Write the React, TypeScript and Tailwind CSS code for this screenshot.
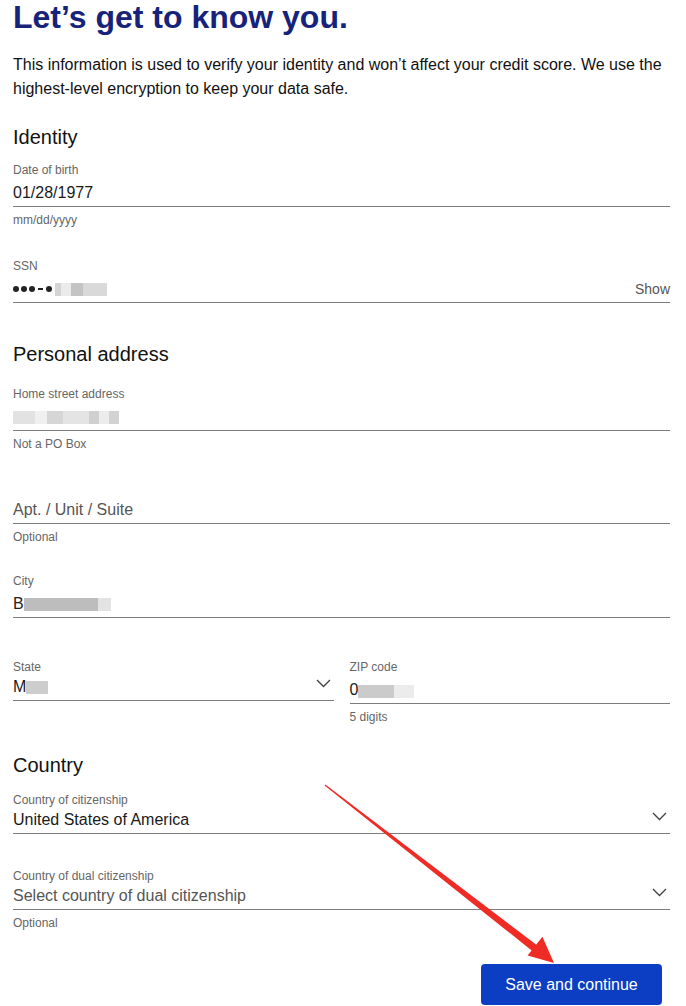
import React from 'react';

const labelCls = 'block text-[12px] leading-4 text-[#666]';

const Chevron = () => (
  <svg width="15" height="9" viewBox="0 0 15 9" className="mt-[4px] mr-[3px] shrink-0">
    <polyline points="1,1 7.5,7.5 14,1" fill="none" stroke="#444" strokeWidth="1.4" />
  </svg>
);

const Blur = ({ w, shade }: { w: number; shade: string }) => (
  <span className={`inline-block h-[13px] blur-[0.6px] ${shade}`} style={{ width: w }} />
);

type TextFieldProps = {
  label?: string;
  value?: React.ReactNode;
  placeholder?: string;
  helper?: string;
  right?: React.ReactNode;
  className?: string;
};

const TextField = ({ label, value, placeholder, helper, right, className = '' }: TextFieldProps) => (
  <div className={className}>
    <span className={`${labelCls} h-4 pt-px`}>{label}</span>
    <div className="flex items-center justify-between pt-[4px] pb-[1px] border-b border-[#7d7d7d]">
      <div className="flex items-center h-6 text-[16px] leading-6 text-[#1a1a1a]">
        {value ?? <span className="text-[#555]">{placeholder}</span>}
      </div>
      {right}
    </div>
    {helper && <p className={`${labelCls} mt-[5px]`}>{helper}</p>}
  </div>
);

type SelectFieldProps = {
  label: string;
  value?: React.ReactNode;
  placeholder?: string;
  helper?: string;
  className?: string;
};

const SelectField = ({ label, value, placeholder, helper, className = '' }: SelectFieldProps) => (
  <div className={className}>
    <span className="block text-[12px] leading-[13px] text-[#666] pt-px">{label}</span>
    <div className="flex items-start justify-between pt-[1px] pb-[1px] border-b border-[#7d7d7d]">
      <div className="flex items-center h-6 text-[16px] leading-6 text-[#1a1a1a]">
        {value ?? <span className="text-[#555]">{placeholder}</span>}
      </div>
      <Chevron />
    </div>
    {helper && <p className={`${labelCls} mt-[5px]`}>{helper}</p>}
  </div>
);

const Dot = () => <span className="inline-block w-[6px] h-[6px] rounded-full bg-[#222]" />;

export default function App() {
  return (
    <div className="relative w-[686px] min-h-[1006px] bg-white font-['Liberation_Sans',Arial,sans-serif] pl-[13px] pr-[16px] pt-px">
      <h1 className="text-[32px] leading-8 font-bold text-[#17237a]">Let’s get to know you.</h1>
      <p className="mt-[20px] text-[16px] leading-6 text-[#111]">
        This information is used to verify your identity and won’t affect your credit score. We use the highest-level
        encryption to keep your data safe.
      </p>

      <h2 className="mt-[22px] text-[20px] leading-7 text-[#111]">Identity</h2>
      <TextField className="mt-[10px]" label="Date of birth" value="01/28/1977" helper="mm/dd/yyyy" />
      <TextField
        className="mt-[29px]"
        label="SSN"
        value={
          <span className="flex items-center gap-[2px]">
            <Dot />
            <Dot />
            <Dot />
            <span className="inline-block w-[5px] h-[2px] bg-[#222] mx-[1px]" />
            <Dot />
            <span className="flex items-center ml-[1px]">
              <Blur w={6} shade="bg-[#d4d4d4]" />
              <Blur w={10} shade="bg-[#ebebeb]" />
              <Blur w={12} shade="bg-[#c4c4c4]" />
              <Blur w={24} shade="bg-[#d9d9d9]" />
            </span>
          </span>
        }
        right={<span className="text-[14px] text-[#555]">Show</span>}
      />

      <h2 className="mt-[37px] text-[20px] leading-7 text-[#111]">Personal address</h2>
      <TextField
        className="mt-[17px]"
        label="Home street address"
        value={
          <span className="flex items-center">
            <Blur w={22} shade="bg-[#e2e2e2]" />
            <Blur w={12} shade="bg-[#f0f0f0]" />
            <Blur w={16} shade="bg-[#d6d6d6]" />
            <Blur w={26} shade="bg-[#e4e4e4]" />
            <Blur w={10} shade="bg-[#cfcfcf]" />
            <Blur w={10} shade="bg-[#ececec]" />
            <Blur w={10} shade="bg-[#d2d2d2]" />
          </span>
        }
        helper="Not a PO Box"
      />
      <TextField className="mt-[26px]" placeholder="Apt. / Unit / Suite" helper="Optional" />
      <TextField
        className="mt-[27px]"
        label="City"
        value={
          <span className="flex items-center">
            <span className="text-[#222]">B</span>
            <Blur w={74} shade="bg-[#bdbdbd]" />
            <Blur w={13} shade="bg-[#e3e3e3]" />
          </span>
        }
      />

      <div className="mt-[40px] grid grid-cols-2 gap-[16px]">
        <SelectField
          className="pt-[2px]"
          label="State"
          value={
            <span className="flex items-center">
              <span>M</span>
              <Blur w={22} shade="bg-[#cdcdcd]" />
            </span>
          }
        />
        <TextField
          label="ZIP code"
          value={
            <span className="flex items-center">
              <span>0</span>
              <span className="flex items-center mt-[3px]">
                <Blur w={36} shade="bg-[#cbcbcb]" />
                <Blur w={20} shade="bg-[#ececec]" />
              </span>
            </span>
          }
          helper="5 digits"
        />
      </div>

      <h2 className="mt-[26px] text-[20px] leading-7 text-[#111]">Country</h2>
      <SelectField className="mt-[14px]" label="Country of citizenship" value="United States of America" />
      <SelectField
        className="mt-[35px]"
        label="Country of dual citizenship"
        placeholder="Select country of dual citizenship"
        helper="Optional"
      />

      <div className="mt-[33px] flex justify-end pr-[8px]">
        <button className="w-[181px] h-[41px] rounded-[4px] bg-[#0b3ec2] text-white text-[16px]">
          Save and continue
        </button>
      </div>

      <svg
        className="absolute left-0 top-0 pointer-events-none"
        width="686"
        height="1006"
        viewBox="0 0 686 1006"
      >
        <polygon points="324.6,785.4 325.4,784.6 540,947.6 535.4,953.4" fill="#ee2b24" />
        <polygon points="554,963 527.6,955.6 542.4,936.8" fill="#ee2b24" />
      </svg>
    </div>
  );
}
